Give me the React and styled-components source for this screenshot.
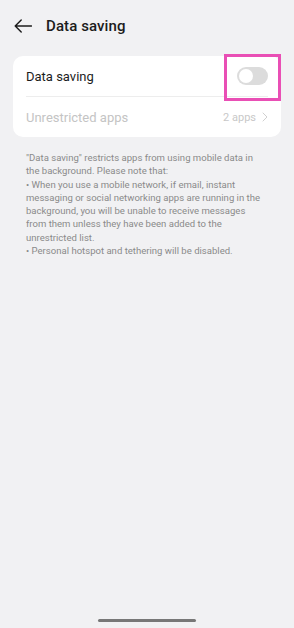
import React from "react";
import styled, { createGlobalStyle } from "styled-components";

const Global = createGlobalStyle`
  html, body { margin: 0; padding: 0; background: #f1f1f3; }
  body { font-family: Roboto, "Noto Sans", sans-serif; -webkit-font-smoothing: antialiased; }
`;

const Page = styled.div`
  width: 294px;
  height: 628px;
  background: #f1f1f3;
  display: flex;
  flex-direction: column;
  position: relative;
  overflow: hidden;
`;

const Header = styled.div`
  height: 52px;
  display: flex;
  align-items: center;
  padding: 0 14px;
  box-sizing: border-box;
  gap: 14px;
`;

const Title = styled.div`
  font-size: 15px;
  font-weight: 500;
  color: #1c1c1c;
  letter-spacing: 0.1px;
`;

const Card = styled.div`
  margin: 4px 13px 0;
  background: #fff;
  border-radius: 10px;
  padding: 0 13px;
  display: flex;
  flex-direction: column;
`;

const Row = styled.div`
  height: ${(p) => p.$h}px;
  display: flex;
  align-items: center;
  justify-content: space-between;
  border-bottom: ${(p) => (p.$divider ? "1px solid #ededed" : "none")};
  box-sizing: border-box;
`;

const Label = styled.div`
  font-size: 13px;
  color: ${(p) => (p.$muted ? "#c4c4c4" : "#1c1c1c")};
`;

const Value = styled.div`
  display: flex;
  align-items: center;
  gap: 6px;
  font-size: 11px;
  color: #c8c8c8;
`;

const ToggleWrap = styled.div`
  position: relative;
  display: flex;
  align-items: center;
`;

const Toggle = styled.div`
  width: 31px;
  height: 18px;
  border-radius: 9px;
  background: #dcdcdc;
  position: relative;
  &::after {
    content: "";
    position: absolute;
    left: 2px;
    top: 2px;
    width: 14px;
    height: 14px;
    border-radius: 50%;
    background: #fff;
  }
`;

const Highlight = styled.div`
  position: absolute;
  left: -13px;
  top: -13px;
  width: 57px;
  height: 47px;
  border: 3.5px solid #e94fb5;
  box-sizing: border-box;
`;

const Note = styled.div`
  margin: 14px 28px 0 26px;
  font-size: 9.55px;
  line-height: 13.3px;
  color: #8a8a8a;
`;

const HomeBar = styled.div`
  position: absolute;
  left: 98px;
  bottom: 6px;
  width: 98px;
  height: 3px;
  border-radius: 2px;
  background: #777;
`;

export default function App() {
  return (
    <Page>
      <Global />
      <Header>
        <svg width="18" height="14" viewBox="0 0 18 14" fill="none">
          <path d="M17.5 7H1.2M7.2 1L1.2 7l6 6" stroke="#1c1c1c" strokeWidth="1.4" strokeLinecap="round" strokeLinejoin="round" />
        </svg>
        <Title>Data saving</Title>
      </Header>
      <Card>
        <Row $h={41} $divider>
          <Label>Data saving</Label>
          <ToggleWrap>
            <Toggle />
            <Highlight />
          </ToggleWrap>
        </Row>
        <Row $h={40}>
          <Label $muted>Unrestricted apps</Label>
          <Value>
            2 apps
            <svg width="6" height="10" viewBox="0 0 6 10" fill="none">
              <path d="M1 1l4 4-4 4" stroke="#d0d0d0" strokeWidth="1" strokeLinecap="round" strokeLinejoin="round" />
            </svg>
          </Value>
        </Row>
      </Card>
      <Note>
        "Data saving" restricts apps from using mobile data in the background. Please note that:
        <br />• When you use a mobile network, if email, instant messaging or social networking apps are running in the background, you will be unable to receive messages from them unless they have been added to the unrestricted list.
        <br />• Personal hotspot and tethering will be disabled.
      </Note>
      <HomeBar />
    </Page>
  );
}
